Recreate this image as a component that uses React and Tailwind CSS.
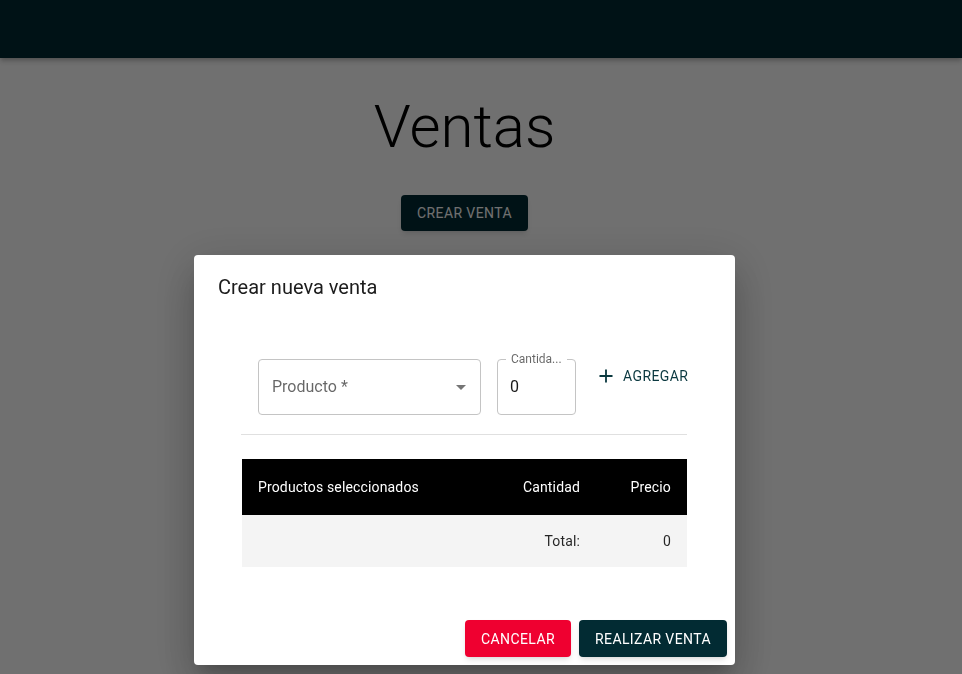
import { Plus } from 'lucide-react';

const font = { fontFamily: 'Roboto, "Noto Sans", sans-serif' };

function DropArrow() {
  return (
    <svg viewBox="0 0 24 24" className="w-6 h-6 fill-[#757575]">
      <path d="M7 10l5 5 5-5z" />
    </svg>
  );
}

export default function App() {
  return (
    <div className="relative min-h-[674px] bg-white" style={font}>
      {/* Barra superior */}
      <header className="h-[58px] bg-[#022b33] shadow-[0_2px_4px_-1px_rgba(0,0,0,0.2),0_4px_5px_0_rgba(0,0,0,0.14)]" />

      {/* Contenido */}
      <main className="flex flex-col items-center pr-[33px]">
        <h1 className="mt-[33px] text-[60px] leading-[72px] font-light text-black">Ventas</h1>
        <button className="mt-[32px] h-9 px-4 rounded bg-[#022b33] text-white text-sm font-normal tracking-[0.4px] uppercase shadow-md">
          Crear venta
        </button>
      </main>

      {/* Fondo del diálogo */}
      <div className="fixed inset-0 bg-black/[0.56] flex justify-center items-start pt-[255px] pr-[33px]">
        <div className="w-[541px] bg-white rounded shadow-[0_11px_15px_-7px_rgba(0,0,0,0.2),0_24px_38px_3px_rgba(0,0,0,0.14),0_9px_46px_8px_rgba(0,0,0,0.12)]">
          <h2 className="px-6 py-4 text-[20px] leading-8 text-[#1c1c1c]">Crear nueva venta</h2>

          <div className="pt-[40px] pb-[45px] pl-[48px] pr-[48px]">
            {/* Formulario */}
            <div className="flex items-start pl-4">
              <div className="shrink-0 w-[223px] h-14 border border-[#c4c4c4] rounded flex items-center justify-between pl-[13px] pr-[7px]">
                <span className="text-base text-black/60">Producto *</span>
                <DropArrow />
              </div>

              <div className="shrink-0 relative ml-4 w-[79px] h-14 border border-[#c4c4c4] rounded flex items-center pl-[12px]">
                <span className="absolute -top-[9px] left-[8px] bg-white px-[5px] text-xs leading-4 text-black/60 whitespace-nowrap">
                  Cantida...
                </span>
                <span className="text-base text-black/90">0</span>
              </div>

              <button className="shrink-0 ml-[20px] -mt-[1px] h-9 flex items-center gap-[7px] text-[#0b3940] text-sm font-normal tracking-[0.4px] uppercase whitespace-nowrap">
                <Plus className="w-5 h-5" strokeWidth={2.2} />
                Agregar
              </button>
            </div>

            <div className="mt-[19px] -ml-px border-t border-[#e0e0e0]" />

            {/* Tabla */}
            <div className="mt-[24px] text-sm tracking-[0.15px]">
              <div className="grid grid-cols-[1fr_90px_91px] h-14 items-center bg-black text-white">
                <span className="pl-4">Productos seleccionados</span>
                <span className="text-right pr-4">Cantidad</span>
                <span className="text-right pr-4">Precio</span>
              </div>
              <div className="grid grid-cols-[1fr_90px_91px] h-[52px] items-center bg-[#f4f4f4] text-black/85">
                <span />
                <span className="text-right pr-4">Total:</span>
                <span className="text-right pr-4">0</span>
              </div>
            </div>
          </div>

          {/* Acciones */}
          <div className="flex justify-end gap-2 p-2">
            <button className="h-[37px] w-[106px] rounded bg-[#ef0030] text-white text-sm font-normal tracking-[0.4px] uppercase shadow-md">
              Cancelar
            </button>
            <button className="h-[37px] w-[148px] rounded bg-[#022b33] text-white text-sm font-normal tracking-[0.4px] uppercase shadow-md">
              Realizar venta
            </button>
          </div>
        </div>
      </div>
    </div>
  );
}
